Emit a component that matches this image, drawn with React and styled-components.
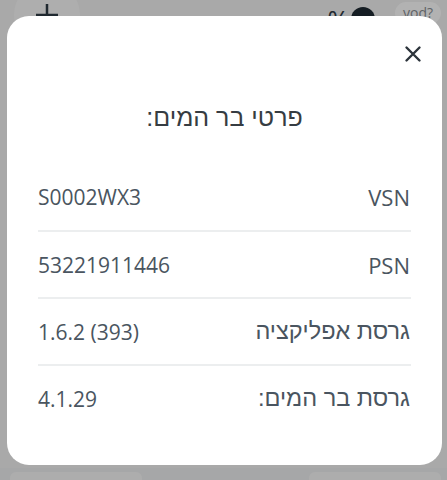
import React from "react";
import styled, { createGlobalStyle } from "styled-components";

const Global = createGlobalStyle`
  html, body { margin: 0; padding: 0; }
  body {
    width: 447px;
    height: 480px;
    overflow: hidden;
    background: #f2f2f2;
    font-family: "Open Sans", "Liberation Sans", "DejaVu Sans", sans-serif;
  }
`;

const hebrewFont = `"Liberation Sans", "DejaVu Sans", sans-serif`;
const latinFont = `"Open Sans", "Liberation Sans", sans-serif`;

const Screen = styled.div`
  width: 447px;
  height: 480px;
  display: flex;
  flex-direction: column;
  justify-content: space-between;
  background: #f2f2f2;
`;

const TopBar = styled.div`
  display: flex;
  align-items: flex-start;
  justify-content: space-between;
  padding: 0 6px 0 14px;
  height: 60px;
  margin-top: -18px;
`;

const RoundButton = styled.div`
  width: 66px;
  height: 66px;
  border-radius: 50%;
  background: #fafafa;
  display: flex;
  align-items: center;
  justify-content: center;
  color: #2f3b46;
`;

const RightGroup = styled.div`
  display: flex;
  align-items: flex-start;
  gap: 20px;
  padding-top: 24px;
`;

const Percent = styled.div`
  display: flex;
  align-items: center;
  gap: 2px;
  font-size: 26px;
  line-height: 1;
  color: #2f3b46;
`;

const Dot = styled.span`
  width: 24px;
  height: 24px;
  border-radius: 50%;
  background: #1f2a33;
`;

const Badge = styled.div`
  flex: none;
  margin-top: -4px;
  background: #ffffff;
  color: #8a8f94;
  border-radius: 14px;
  padding: 2px 8px;
  font-size: 14px;
  line-height: 18px;
`;

const BottomBar = styled.div`
  display: flex;
  justify-content: space-between;
  gap: 20px;
  height: 12px;
  padding: 0 6px 0 10px;
  background: #eef0f1;
`;

const BottomTab = styled.div`
  width: 132px;
  margin-top: 4px;
  background: #f8f8f8;
  border-radius: 6px 6px 0 0;
`;

const Overlay = styled.div`
  position: fixed;
  inset: 0;
  background: rgba(0, 0, 0, 0.3);
  display: flex;
  align-items: flex-start;
  justify-content: flex-start;
  padding: 16px 0 0 7px;
`;

const Dialog = styled.div`
  width: 435px;
  height: 449px;
  box-sizing: border-box;
  background: #ffffff;
  border-radius: 22px;
  padding: 28px 31px 0 31px;
  display: flex;
  flex-direction: column;
  direction: rtl;
`;

const CloseRow = styled.div`
  height: 20px;
  display: flex;
  justify-content: flex-start;
  align-items: center;
  margin-right: -12px;
`;

const CloseButton = styled.button`
  border: 0;
  background: none;
  padding: 0;
  width: 20px;
  height: 20px;
  display: flex;
  align-items: center;
  justify-content: center;
  color: #2c343b;
  cursor: pointer;
`;

const Title = styled.h2`
  margin: 38px 0 0 0;
  height: 30px;
  line-height: 30px;
  text-align: center;
  font-family: ${hebrewFont};
  font-size: 25px;
  font-weight: 400;
  color: #363c42;
`;

const List = styled.div`
  margin-top: 31px;
  display: flex;
  flex-direction: column;
`;

const Row = styled.div`
  height: 67px;
  display: flex;
  align-items: center;
  justify-content: space-between;
  border-top: ${(p) => (p.$first ? "none" : "2px solid #eceeef")};
  box-sizing: border-box;
  font-size: 21px;
  color: #4a5560;
  padding: 0 1px 0 0;
`;

const Label = styled.span`
  font-family: ${(p) => (p.$hebrew ? hebrewFont : latinFont)};
  font-size: ${(p) => (p.$hebrew ? "23.5px" : "22px")};
  font-weight: 400;
`;

const Value = styled.span`
  direction: ltr;
  font-family: ${latinFont};
`;

const rows = [
  ["VSN", "S0002WX3", false],
  ["PSN", "53221911446", false],
  ["גרסת אפליקציה", "1.6.2 (393)", true],
  ["גרסת בר המים:", "4.1.29", true],
];

export default function App() {
  return (
    <>
      <Global />
      <Screen>
        <TopBar>
          <RoundButton>
            <svg width="26" height="26" viewBox="0 0 26 26">
              <path d="M13 2v22M2 13h22" stroke="currentColor" strokeWidth="2.5" />
            </svg>
          </RoundButton>
          <RightGroup>
            <Percent>
              %<Dot />
            </Percent>
            <Badge>yod?</Badge>
          </RightGroup>
        </TopBar>
        <BottomBar>
          <BottomTab />
          <BottomTab />
        </BottomBar>
      </Screen>
      <Overlay>
        <Dialog>
          <CloseRow>
            <CloseButton aria-label="close">
              <svg width="18" height="18" viewBox="0 0 18 18">
                <path d="M2.5 2.5l13 13M15.5 2.5l-13 13" stroke="currentColor" strokeWidth="2.4" strokeLinecap="round" />
              </svg>
            </CloseButton>
          </CloseRow>
          <Title>פרטי בר המים:</Title>
          <List>
            {rows.map(([l, v, h], i) => (
              <Row key={l} $first={i === 0}>
                <Label $hebrew={h}>{l}</Label>
                <Value>{v}</Value>
              </Row>
            ))}
          </List>
        </Dialog>
      </Overlay>
    </>
  );
}
